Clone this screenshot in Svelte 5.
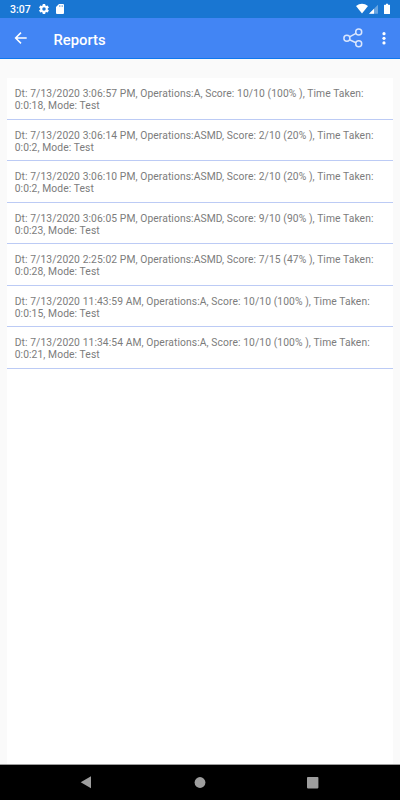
<script>
  const reports = [
    ['7/13/2020 3:06:57 PM', 'A', '10/10 (100% )', '0:0:18'],
    ['7/13/2020 3:06:14 PM', 'ASMD', '2/10 (20% )', '0:0:2'],
    ['7/13/2020 3:06:10 PM', 'ASMD', '2/10 (20% )', '0:0:2'],
    ['7/13/2020 3:06:05 PM', 'ASMD', '9/10 (90% )', '0:0:23'],
    ['7/13/2020 2:25:02 PM', 'ASMD', '7/15 (47% )', '0:0:28'],
    ['7/13/2020 11:43:59 AM', 'A', '10/10 (100% )', '0:0:15'],
    ['7/13/2020 11:34:54 AM', 'A', '10/10 (100% )', '0:0:21']
  ];
</script>

<div class="screen">
  <div class="status">
    <span class="time">3:07</span>
    <svg class="gear" width="12" height="12" viewBox="0 0 24 24"><path fill="#fff" fill-rule="evenodd" d="M19.4 13a7.500 7.500 0 0 0 0-2l2.100-1.600a.5.5 0 0 0 .1-.6l-2-3.500a.5.5 0 0 0-.6-.2l-2.500 1a7.300 7.300 0 0 0-1.700-1L14.400 2.400a.5.5 0 0 0-.5-.4h-4a.5.5 0 0 0-.5.4L9 5.100a7.700 7.700 0 0 0-1.700 1l-2.500-1a.5.5 0 0 0-.6.2l-2 3.500a.5.5 0 0 0 .1.600L4.500 11a8 8 0 0 0 0 2l-2.200 1.600a.5.5 0 0 0-.1.600l2 3.500c.1.200.4.300.6.200l2.500-1a7.300 7.300 0 0 0 1.700 1l.4 2.700c0 .2.200.4.500.4h4c.3 0 .5-.2.500-.4l.4-2.700a7.700 7.700 0 0 0 1.700-1l2.500 1c.2.100.5 0 .6-.2l2-3.500a.5.500 0 0 0-.1-.600zM12 15.500a3.500 3.500 0 1 1 0-7 3.500 3.500 0 0 1 0 7z"/></svg>
    <svg class="card" width="8" height="10" viewBox="0 0 8 10"><path fill="#fff" d="M3 0h4q1 0 1 1v8q0 1-1 1H1Q0 10 0 9V3z"/><path stroke="#1976d2" stroke-width=".6" d="M3.500 1.300v1.500M5 1.300v1.500M6.500 1.300v1.500"/></svg>
    <span class="grow"></span>
    <svg width="36" height="12" viewBox="0 0 36 12"><path fill="#fff" d="M0 3Q6-1.400 12 3L6 10.500z"/><path fill="#fff" opacity=".35" d="M22 1.700v9h-9z"/><path fill="#fff" d="M18 5.700v5h-5z"/><path fill="#fff" d="M28.500 1.800H30V.8h2v1h1.500q.5 0 .5.500V10.400q0 .5-.5.500h-5q-.5 0-.5-.5V2.300q0-.5.500-.5z"/></svg>
  </div>
  <header>
    <svg class="back" width="14" height="14" viewBox="0 0 14 14"><path d="M12.700 7H1.800M7 1.600 1.600 7 7 12.400" fill="none" stroke="#fff" stroke-width="1.500"/></svg>
    <h1>Reports</h1>
    <svg class="share" width="20" height="20" viewBox="0 0 20 20"><g fill="none" stroke="#d9e6fd" stroke-width="1.500"><circle cx="3.900" cy="10.300" r="3"/><circle cx="15.700" cy="4" r="3"/><circle cx="15.700" cy="15.700" r="3"/><path d="m6.500 8.900 6.500-3.500M6.500 11.700l6.500 3"/></g></svg>
    <svg class="more" width="4" height="14" viewBox="0 0 4 14"><g fill="#fff"><circle cx="2" cy="2.700" r="1.600"/><circle cx="2" cy="7.300" r="1.600"/><circle cx="2" cy="11.900" r="1.600"/></g></svg>
  </header>
  <main>
    <ul>
      {#each reports as [date, ops, score, taken]}
        <li>Dt: {date}, Operations:{ops}, Score: {score}, Time Taken:<br />{taken}, Mode: Test</li>
      {/each}
    </ul>
  </main>
  <nav>
    <svg width="12" height="13" viewBox="0 0 12 13"><path fill="#9e9e9e" d="M.7 6.200 11 .2v12z"/></svg>
    <svg width="12" height="12" viewBox="0 0 12 12"><circle cx="6" cy="5.500" r="5.400" fill="#9e9e9e"/></svg>
    <svg width="12" height="12" viewBox="0 0 12 12"><rect x="0" y="0" width="11.400" height="11.400" rx=".8" fill="#9e9e9e"/></svg>
  </nav>
</div>

<style>
  .screen {
    width: 400px;
    height: 800px;
    display: flex;
    flex-direction: column;
    overflow: hidden;
    background: #fafafa;
    font-family: Roboto, sans-serif;
  }
  svg { display: block; flex: none; }
  .status {
    height: 18px;
    flex: none;
    box-sizing: border-box;
    display: flex;
    align-items: center;
    padding: 0 8px 0 10px;
    background: #1976d2;
    color: #fff;
  }
  .time { width: 28px; padding-top: 1px; font-size: 10.500px; font-weight: 500; line-height: 18px; }
  .card { margin-left: 6px; }
  .grow { flex: 1; }
  header {
    height: 41px;
    flex: none;
    box-sizing: border-box;
    display: flex;
    align-items: center;
    padding: 0 14.500px 0 14px;
    background: #4285f4;
    border-bottom: 1px solid #0f78ee;
  }
  h1 {
    flex: 1;
    margin: 3px 0 0 25.500px;
    color: #fff;
    font-size: 14.800px;
    line-height: 20px;
    font-weight: 500;
  }
  .share { margin-right: 18.500px; }
  main { flex: 1; min-height: 0; display: flex; padding: 19px 7px 0; }
  ul { flex: 1; margin: 0; padding: 0; list-style: none; background: #fff; }
  li {
    height: 41.500px;
    box-sizing: border-box;
    padding: 10px 7.700px 0;
    border-bottom: 1px solid #bccbf5;
    color: #7c7c7c;
    font-size: 10.300px;
    line-height: 12px;
    letter-spacing: .087px;
    white-space: nowrap;
  }
  nav {
    height: 36px;
    flex: none;
    box-sizing: border-box;
    display: flex;
    align-items: center;
    justify-content: space-between;
    padding: 0 81px 0 80px;
    background: #000;
    border-top: 1px solid #9e9e9e;
  }
</style>
